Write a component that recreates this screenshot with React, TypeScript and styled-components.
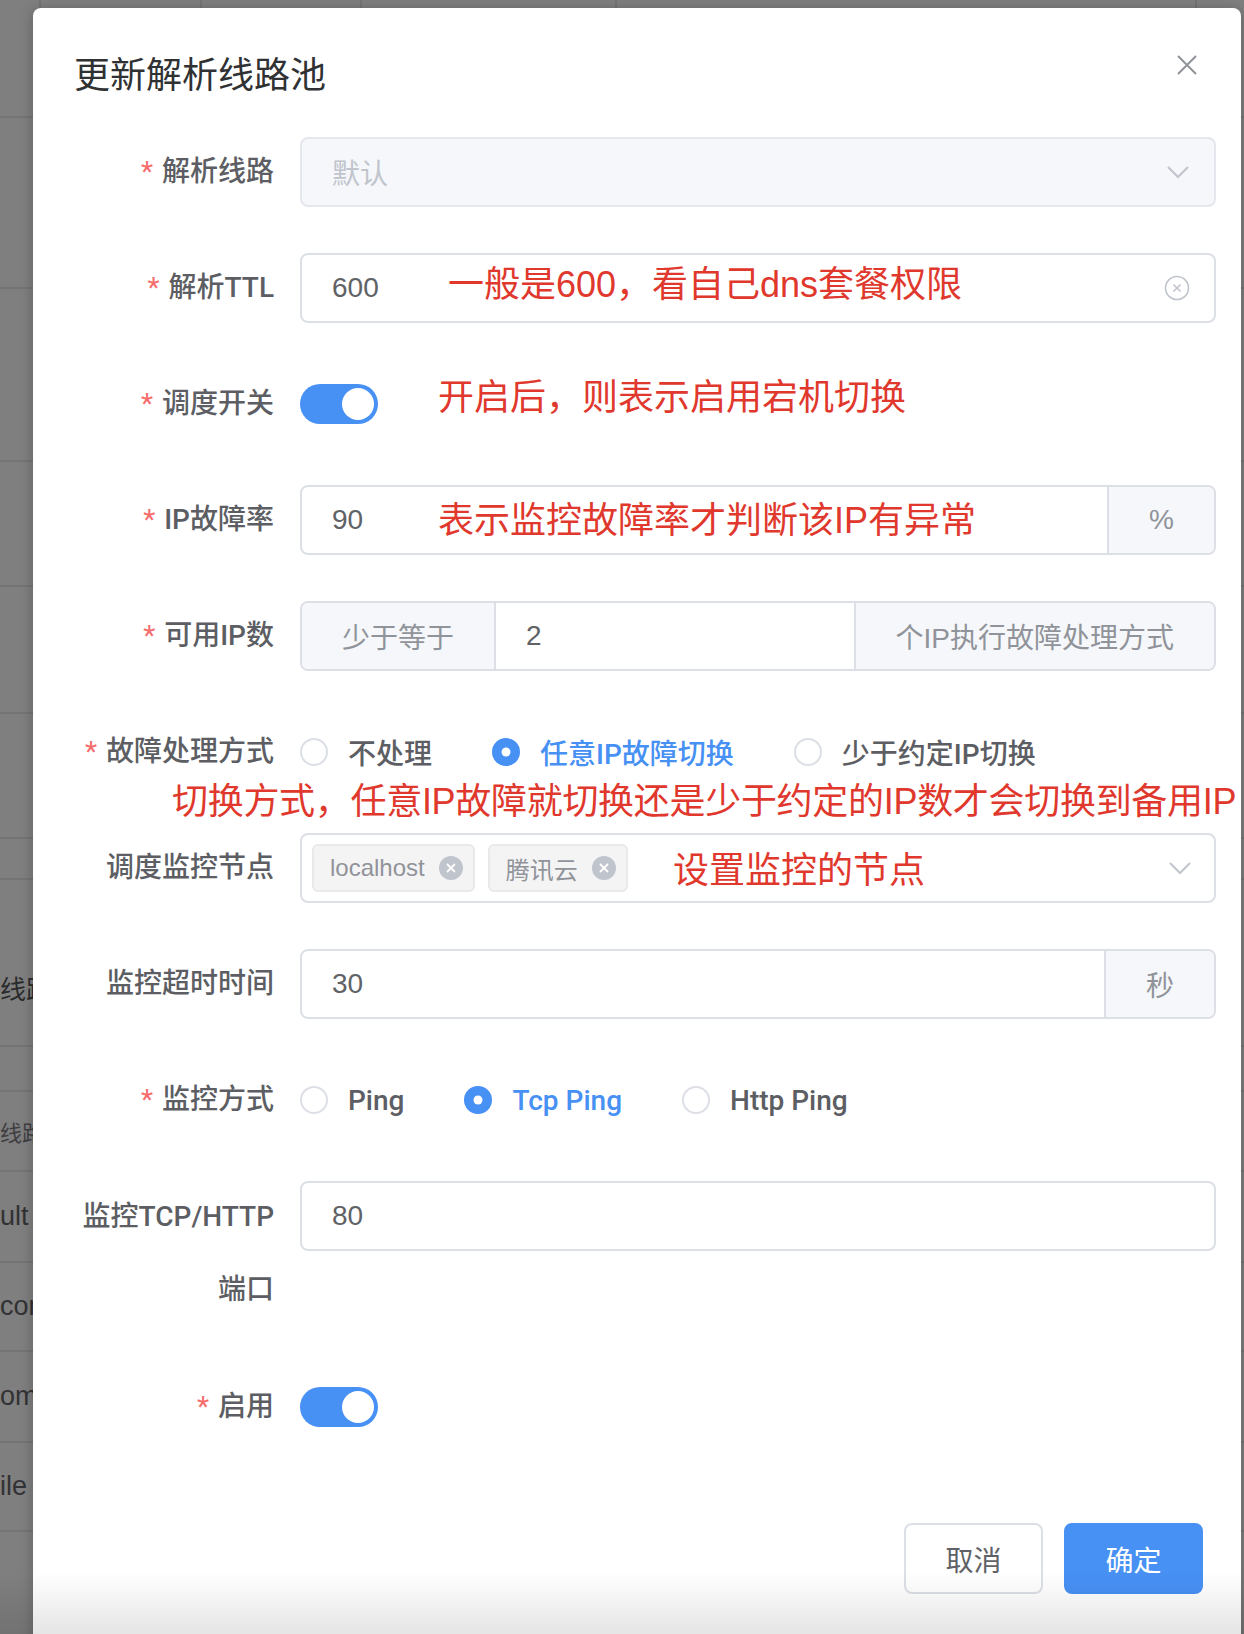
import styled, { createGlobalStyle } from "styled-components";

const BLUE = "#4790f4";
const FONT = `"Liberation Sans", "Noto Sans CJK SC", sans-serif`;
const LABEL_FONT = `Roboto, "Noto Sans CJK SC", sans-serif`;

const GlobalStyle = createGlobalStyle`
  html, body {
    margin: 0;
    padding: 0;
  }
  body {
    background: #7f7f80;
    font-family: ${FONT};
  }
`;

const Page = styled.div`
  position: relative;
  width: 1244px;
  height: 1634px;
  overflow: hidden;
  background: #7f7f80;
`;

/* ---------- table behind the mask ---------- */

const BgHeader = styled.div`
  display: flex;
  height: 118px;
  box-sizing: border-box;
  border-bottom: 2px solid #747475;
`;

const BgCol = styled.div<{ $w: number }>`
  width: ${(p) => p.$w}px;
  flex-shrink: 0;
  box-sizing: border-box;
  border-right: 2px solid #747475;
`;

const BgRow = styled.div<{ $h: number; $size: number; $color: string; $pad: number }>`
  height: ${(p) => p.$h}px;
  box-sizing: border-box;
  padding-top: ${(p) => p.$pad}px;
  border-bottom: 2px solid #747475;
  display: flex;
  align-items: center;
  white-space: nowrap;
  font-size: ${(p) => p.$size}px;
  color: ${(p) => p.$color};
`;

const bgRows = [
  { h: 171, text: "" },
  { h: 173, text: "" },
  { h: 125, text: "" },
  { h: 127, text: "" },
  { h: 125, text: "" },
  { h: 41, text: "" },
  { h: 167, text: "线路池", size: 26, color: "#2b2b2c", pad: 50 },
  { h: 45, text: "" },
  { h: 80, text: "线路名称", size: 22, color: "#3e3e40" },
  { h: 91, text: "ult", size: 27, color: "#323234" },
  { h: 89, text: "com", size: 27, color: "#323234" },
  { h: 91, text: "om", size: 27, color: "#323234" },
  { h: 89, text: "ile", size: 27, color: "#323234" },
  { h: 110, text: "" },
];

/* ---------- dialog ---------- */

const Dialog = styled.div`
  position: absolute;
  top: 8px;
  left: 33px;
  right: 3px;
  bottom: -20px;
  background: #fff;
  border-radius: 8px 8px 0 0;
  box-shadow: 0 2px 14px rgba(0, 0, 0, 0.25);
`;

const Header = styled.div`
  position: relative;
  padding: 40px 40px 0 41px;
`;

const Title = styled.h2`
  margin: 0;
  font-size: 36px;
  line-height: 48px;
  font-weight: 400;
  color: #303133;
  font-family: "Noto Sans CJK SC", sans-serif;
`;

const CloseButton = styled.button`
  position: absolute;
  top: 47px;
  right: 44px;
  width: 20px;
  height: 20px;
  padding: 0;
  border: 0;
  background: none;
  display: flex;
`;

const Body = styled.div`
  padding: 41px 25px 0 40px;
`;

const FormItem = styled.div`
  position: relative;
  display: flex;
  align-items: flex-start;
  margin-bottom: 46px;
`;

const Label = styled.div<{ $lineHeight?: number }>`
  width: 227px;
  flex-shrink: 0;
  box-sizing: border-box;
  padding-right: 26px;
  text-align: right;
  font-family: ${LABEL_FONT};
  font-size: 28px;
  line-height: ${(p) => p.$lineHeight ?? 70}px;
  font-weight: 500;
  color: #5c5e63;
`;

const Required = styled.span`
  color: #f56c6c;
  font-weight: 400;
  margin-right: 9px;
`;

const Content = styled.div`
  flex: 1;
  min-width: 0;
  display: flex;
  align-items: center;
  height: 70px;
`;

const InputBox = styled.div<{ $disabled?: boolean }>`
  flex: 1;
  height: 70px;
  box-sizing: border-box;
  display: flex;
  align-items: center;
  padding: 0 24px 0 30px;
  border: 2px solid ${(p) => (p.$disabled ? "#e4e7ed" : "#dcdfe6")};
  border-radius: 8px;
  background: ${(p) => (p.$disabled ? "#f5f7fa" : "#fff")};
  font-size: 28px;
  color: ${(p) => (p.$disabled ? "#c0c4cc" : "#606266")};
`;

const InputText = styled.span`
  flex: 1;
`;

const Group = styled.div`
  flex: 1;
  display: flex;
  height: 70px;
  box-sizing: border-box;
  border: 2px solid #dcdfe6;
  border-radius: 8px;
  overflow: hidden;
  font-size: 28px;
`;

const GroupField = styled.div`
  flex: 1;
  display: flex;
  align-items: center;
  padding: 0 30px;
  color: #606266;
`;

const Addon = styled.div<{ $side: "left" | "right" }>`
  display: flex;
  align-items: center;
  padding: 0 40px;
  background: #f5f7fa;
  color: #909399;
  white-space: nowrap;
  ${(p) => (p.$side === "left" ? "border-right" : "border-left")}: 2px solid #dcdfe6;
`;

const Switch = styled.span<{ $on?: boolean }>`
  position: relative;
  display: inline-block;
  width: 78px;
  height: 40px;
  border-radius: 20px;
  background: ${(p) => (p.$on ? BLUE : "#dcdfe6")};

  &::after {
    content: "";
    position: absolute;
    top: 4px;
    left: ${(p) => (p.$on ? "42px" : "4px")};
    width: 32px;
    height: 32px;
    border-radius: 50%;
    background: #fff;
  }
`;

const RadioGroup = styled.div`
  display: flex;
  align-items: center;
  height: 70px;
`;

const RadioItem = styled.label<{ $checked?: boolean }>`
  display: inline-flex;
  align-items: center;
  margin-right: 60px;
  font-family: ${LABEL_FONT};
  font-size: 28px;
  font-weight: 500;
  color: ${(p) => (p.$checked ? BLUE : "#5c5e63")};
`;

const RadioDot = styled.span<{ $checked?: boolean }>`
  position: relative;
  width: 28px;
  height: 28px;
  box-sizing: border-box;
  border-radius: 50%;
  margin-right: 20px;
  border: 2px solid ${(p) => (p.$checked ? BLUE : "#dcdfe6")};
  background: ${(p) => (p.$checked ? BLUE : "#fff")};

  &::after {
    content: "";
    display: ${(p) => (p.$checked ? "block" : "none")};
    position: absolute;
    left: 50%;
    top: 50%;
    width: 9px;
    height: 9px;
    border-radius: 50%;
    background: #fff;
    transform: translate(-50%, -50%);
  }
`;

const SelectBox = styled.div`
  flex: 1;
  height: 70px;
  box-sizing: border-box;
  display: flex;
  align-items: center;
  gap: 13px;
  padding: 0 22px 0 10px;
  border: 2px solid #dcdfe6;
  border-radius: 8px;
`;

const Tag = styled.span`
  display: inline-flex;
  align-items: center;
  gap: 14px;
  height: 48px;
  box-sizing: border-box;
  padding: 0 10px 0 16px;
  background: #f4f4f5;
  border: 2px solid #e9e9eb;
  border-radius: 6px;
  font-size: 24px;
  color: #909399;
`;

const Spacer = styled.span`
  flex: 1;
`;

const Annotation = styled.div<{ $left: number; $top: number; $spacing?: number }>`
  position: absolute;
  left: ${(p) => p.$left}px;
  top: ${(p) => p.$top}px;
  font-size: 36px;
  line-height: 44px;
  letter-spacing: ${(p) => p.$spacing ?? 0}px;
  color: #e0382d;
  white-space: nowrap;
  pointer-events: none;
`;

const Footer = styled.div`
  display: flex;
  justify-content: flex-end;
  gap: 21px;
  padding: 35px 38px 0 0;
`;

const Button = styled.button<{ $primary?: boolean }>`
  width: 139px;
  height: 71px;
  box-sizing: border-box;
  border-radius: 8px;
  font-family: ${FONT};
  font-size: 28px;
  border: 2px solid ${(p) => (p.$primary ? BLUE : "#dcdfe6")};
  background: ${(p) => (p.$primary ? BLUE : "#fff")};
  color: ${(p) => (p.$primary ? "#fff" : "#606266")};
`;

const BottomShade = styled.div`
  position: absolute;
  left: 0;
  right: 0;
  bottom: 0;
  height: 62px;
  background: linear-gradient(rgba(0, 0, 0, 0), rgba(0, 0, 0, 0.1));
  pointer-events: none;
`;

/* ---------- icons ---------- */

const CloseIcon = () => (
  <svg width="20" height="20" viewBox="0 0 20 20">
    <path d="M1 1 L19 19 M19 1 L1 19" stroke="#909399" strokeWidth="2" />
  </svg>
);

const Chevron = () => (
  <svg width="24" height="14" viewBox="0 0 24 14">
    <path d="M2 2 L12 12 L22 2" fill="none" stroke="#c0c4cc" strokeWidth="2" />
  </svg>
);

const ClearIcon = () => (
  <svg width="26" height="26" viewBox="0 0 26 26">
    <circle cx="13" cy="13" r="11.5" fill="none" stroke="#c0c4cc" strokeWidth="1.6" />
    <path d="M9.5 9.5 L16.5 16.5 M16.5 9.5 L9.5 16.5" stroke="#c0c4cc" strokeWidth="1.6" />
  </svg>
);

const TagClose = () => (
  <svg width="24" height="24" viewBox="0 0 24 24">
    <circle cx="12" cy="12" r="12" fill="#c0c4cc" />
    <path d="M8 8 L16 16 M16 8 L8 16" stroke="#fff" strokeWidth="1.8" />
  </svg>
);

const Radio = ({ label, checked }: { label: string; checked?: boolean }) => (
  <RadioItem $checked={checked}>
    <RadioDot $checked={checked} />
    {label}
  </RadioItem>
);

export default function App() {
  return (
    <Page>
      <GlobalStyle />
      <BgHeader>
        <BgCol $w={41} />
        <BgCol $w={161} />
        <BgCol $w={160} />
        <BgCol $w={255} />
        <BgCol $w={580} />
      </BgHeader>
      {bgRows.map((r, i) => (
        <BgRow
          key={i}
          $h={r.h}
          $size={r.size ?? 26}
          $color={r.color ?? "#333"}
          $pad={r.pad ?? 0}
        >
          {r.text}
        </BgRow>
      ))}

      <Dialog>
        <Header>
          <Title>更新解析线路池</Title>
          <CloseButton aria-label="关闭">
            <CloseIcon />
          </CloseButton>
        </Header>

        <Body>
          <FormItem>
            <Label>
              <Required>*</Required>解析线路
            </Label>
            <Content>
              <InputBox $disabled>
                <InputText>默认</InputText>
                <Chevron />
              </InputBox>
            </Content>
          </FormItem>

          <FormItem>
            <Label>
              <Required>*</Required>解析TTL
            </Label>
            <Content>
              <InputBox>
                <InputText>600</InputText>
                <ClearIcon />
              </InputBox>
            </Content>
            <Annotation $left={375} $top={10}>
              一般是600，看自己dns套餐权限
            </Annotation>
          </FormItem>

          <FormItem>
            <Label>
              <Required>*</Required>调度开关
            </Label>
            <Content>
              <Switch $on />
            </Content>
            <Annotation $left={365} $top={7}>
              开启后，则表示启用宕机切换
            </Annotation>
          </FormItem>

          <FormItem>
            <Label>
              <Required>*</Required>IP故障率
            </Label>
            <Content>
              <Group>
                <GroupField>90</GroupField>
                <Addon $side="right">%</Addon>
              </Group>
            </Content>
            <Annotation $left={365} $top={14}>
              表示监控故障率才判断该IP有异常
            </Annotation>
          </FormItem>

          <FormItem>
            <Label>
              <Required>*</Required>可用IP数
            </Label>
            <Content>
              <Group>
                <Addon $side="left">少于等于</Addon>
                <GroupField>2</GroupField>
                <Addon $side="right">个IP执行故障处理方式</Addon>
              </Group>
            </Content>
          </FormItem>

          <FormItem>
            <Label>
              <Required>*</Required>故障处理方式
            </Label>
            <Content>
              <RadioGroup>
                <Radio label="不处理" />
                <Radio label="任意IP故障切换" checked />
                <Radio label="少于约定IP切换" />
              </RadioGroup>
            </Content>
            <Annotation $left={99} $top={63} $spacing={-0.3}>
              切换方式，任意IP故障就切换还是少于约定的IP数才会切换到备用IP
            </Annotation>
          </FormItem>

          <FormItem>
            <Label>调度监控节点</Label>
            <Content>
              <SelectBox>
                <Tag>
                  localhost
                  <TagClose />
                </Tag>
                <Tag>
                  腾讯云
                  <TagClose />
                </Tag>
                <Spacer />
                <Chevron />
              </SelectBox>
            </Content>
            <Annotation $left={600} $top={16}>
              设置监控的节点
            </Annotation>
          </FormItem>

          <FormItem>
            <Label>监控超时时间</Label>
            <Content>
              <Group>
                <GroupField>30</GroupField>
                <Addon $side="right">秒</Addon>
              </Group>
            </Content>
          </FormItem>

          <FormItem>
            <Label>
              <Required>*</Required>监控方式
            </Label>
            <Content>
              <RadioGroup>
                <Radio label="Ping" />
                <Radio label="Tcp Ping" checked />
                <Radio label="Http Ping" />
              </RadioGroup>
            </Content>
          </FormItem>

          <FormItem>
            <Label $lineHeight={72.5}>监控TCP/HTTP端口</Label>
            <Content>
              <InputBox>
                <InputText>80</InputText>
              </InputBox>
            </Content>
          </FormItem>

          <FormItem>
            <Label>
              <Required>*</Required>启用
            </Label>
            <Content>
              <Switch $on />
            </Content>
          </FormItem>
        </Body>

        <Footer>
          <Button>取消</Button>
          <Button $primary>确定</Button>
        </Footer>
      </Dialog>

      <BottomShade />
    </Page>
  );
}
